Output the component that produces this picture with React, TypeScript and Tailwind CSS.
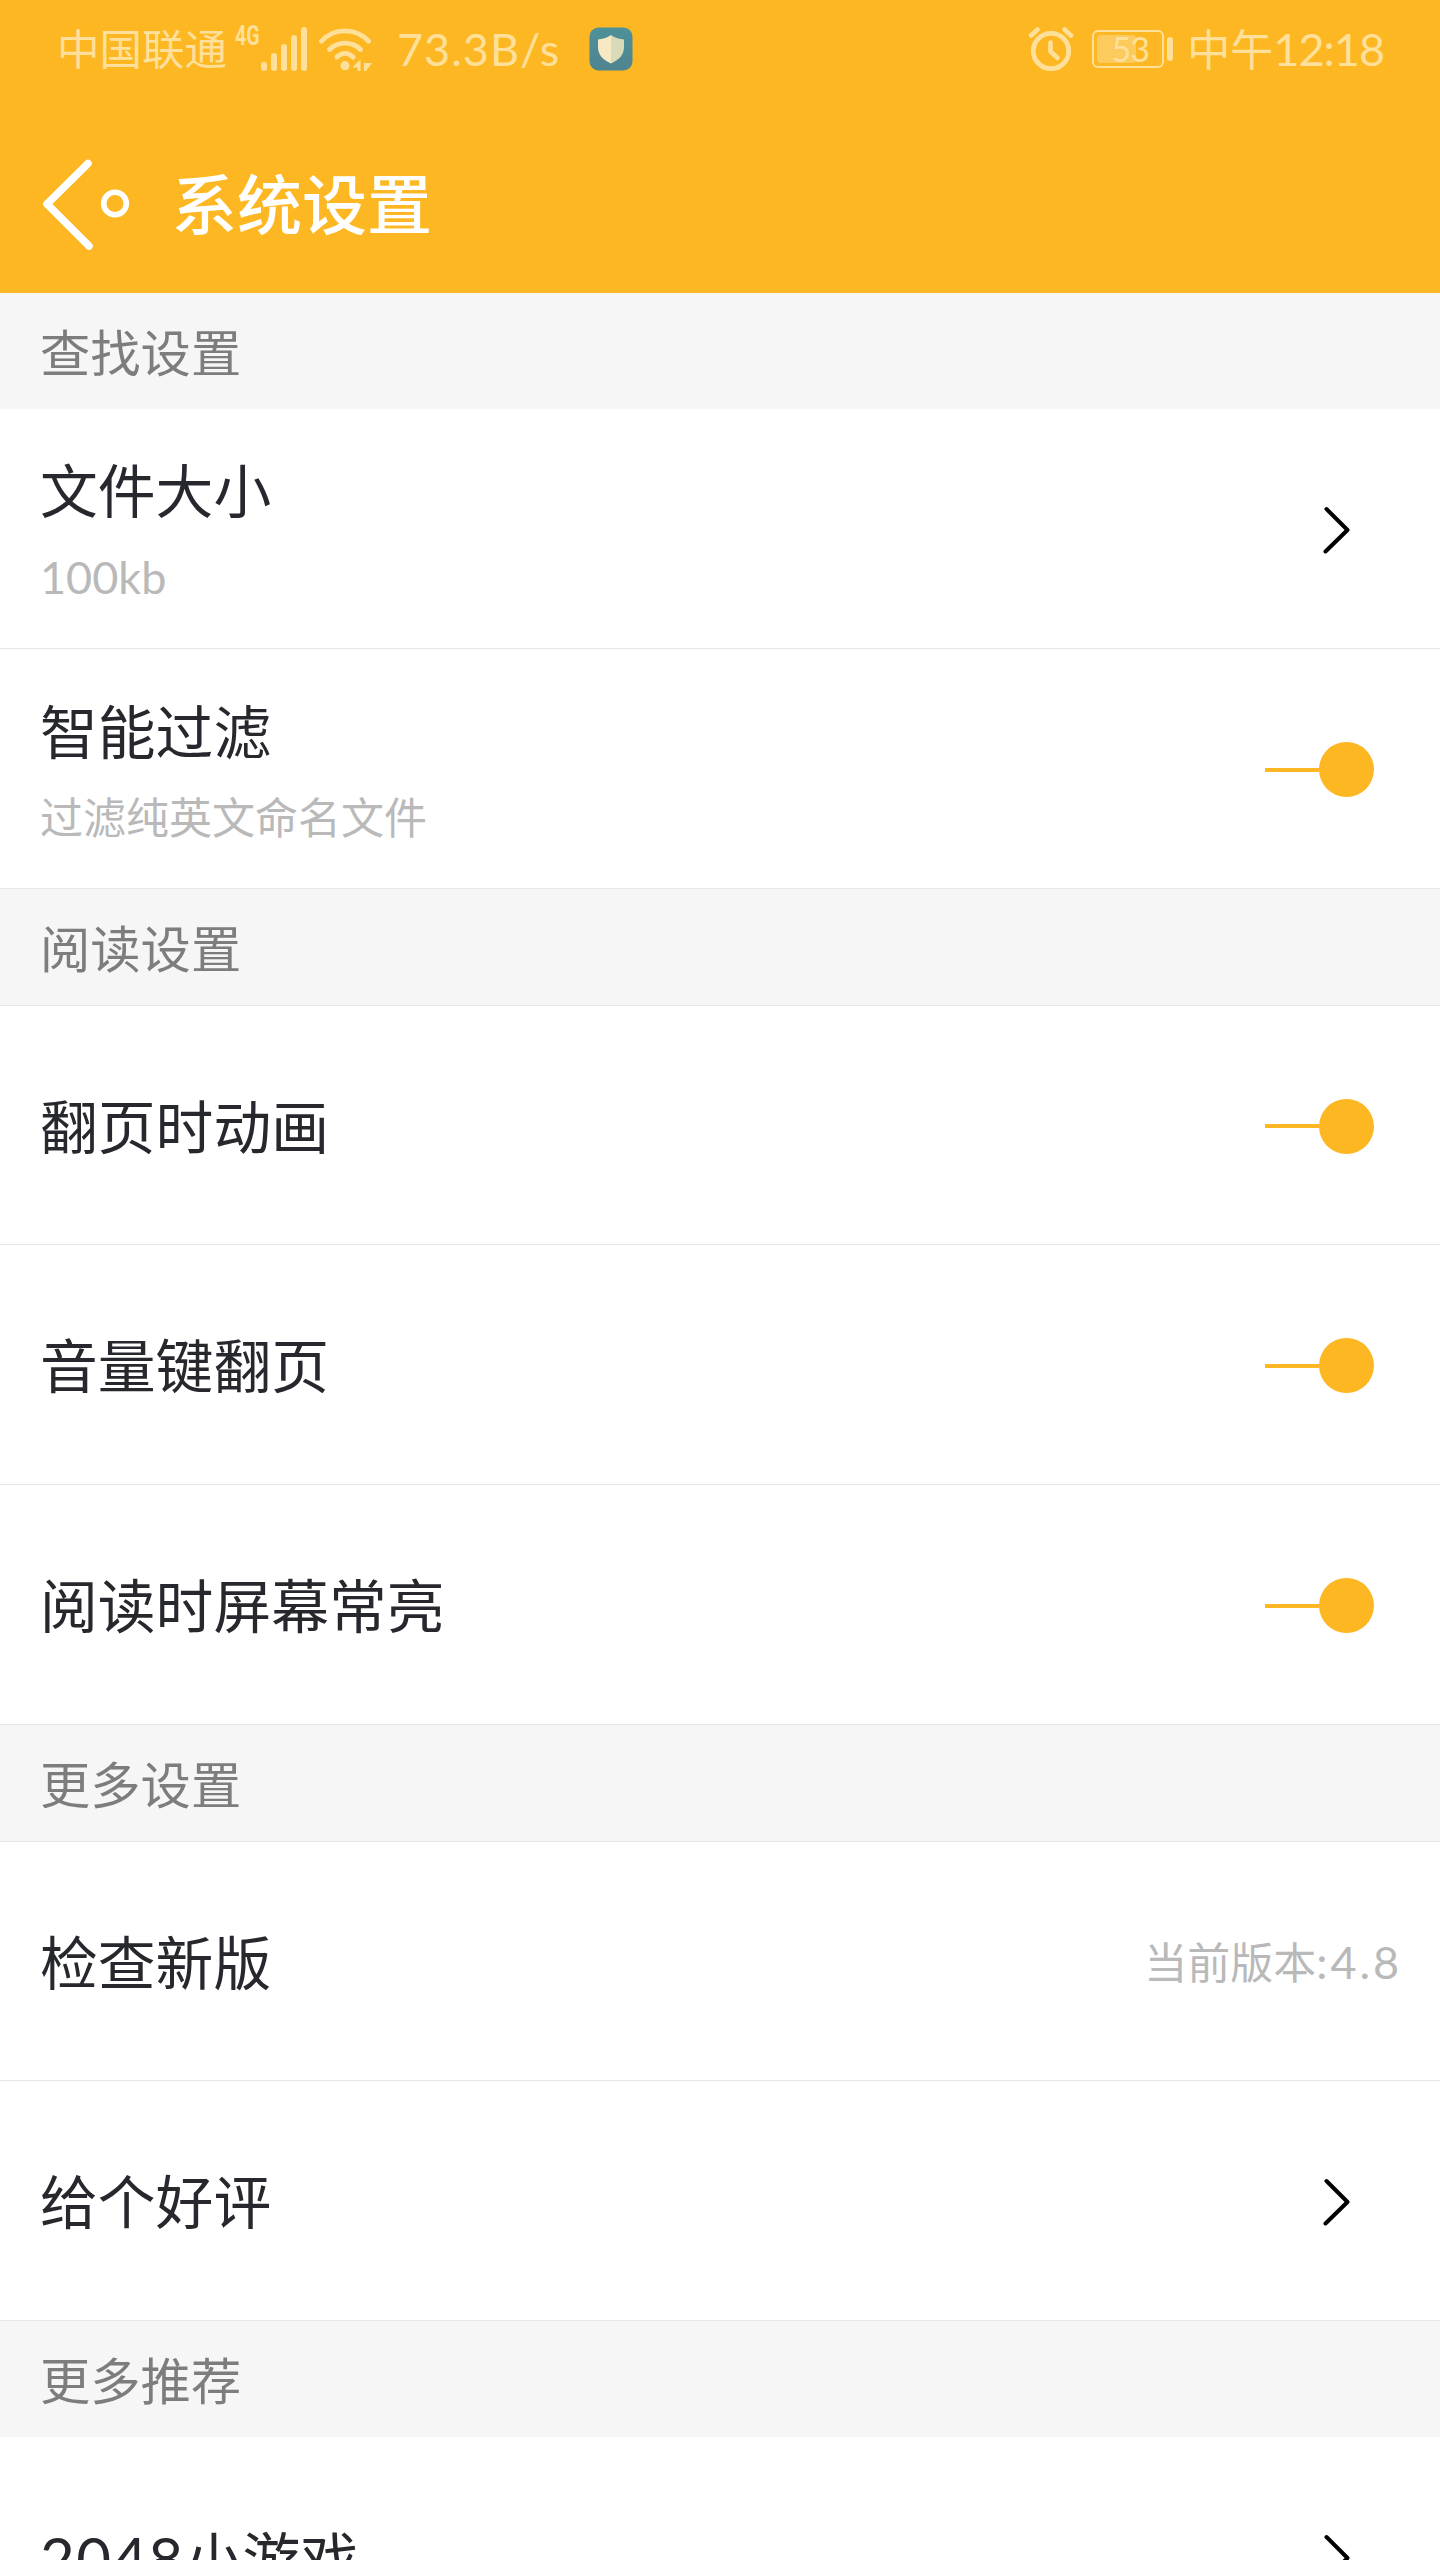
import type { ReactNode } from 'react';
import clsx from 'clsx';

type Item = {
  title: string;
  subtitle?: string;
  value?: string;
  control?: 'arrow' | 'switch';
};

type Section = {
  name: string;
  items: Item[];
  divided?: boolean;
};

const sections: Section[] = [
  {
    name: '查找设置',
    items: [
      { title: '文件大小', subtitle: '100kb', control: 'arrow' },
      { title: '智能过滤', subtitle: '过滤纯英文命名文件', control: 'switch' },
    ],
  },
  {
    name: '阅读设置',
    divided: true,
    items: [
      { title: '翻页时动画', control: 'switch' },
      { title: '音量键翻页', control: 'switch' },
      { title: '阅读时屏幕常亮', control: 'switch' },
    ],
  },
  {
    name: '更多设置',
    divided: true,
    items: [
      { title: '检查新版', value: '当前版本:4.8' },
      { title: '给个好评', control: 'arrow' },
    ],
  },
  {
    name: '更多推荐',
    items: [{ title: '2048小游戏', control: 'arrow' }],
  },
];

// Latin runs are set a little larger and looser than the Chinese around them
function MixedText({ text, latin }: { text: string; latin: string }) {
  return (
    <>
      {text.split(/([\x20-\x7e]+)/).map((part, i) =>
        i % 2 === 1 ? (
          <span key={i} className={latin}>
            {part}
          </span>
        ) : (
          part
        ),
      )}
    </>
  );
}

function SignalIcon() {
  return (
    <svg width="46" height="46" viewBox="0 0 46 46" className="shrink-0" fill="currentColor">
      <rect x="0" y="36" width="6" height="9" rx="3" />
      <rect x="10" y="27" width="6" height="18" rx="3" />
      <rect x="20" y="18" width="6" height="27" rx="3" />
      <rect x="30" y="9" width="6" height="36" rx="3" />
      <rect x="40" y="1" width="6" height="44" rx="3" />
    </svg>
  );
}

function WifiIcon() {
  return (
    <svg width="54" height="46" viewBox="0 0 54 46" className="shrink-0" fill="none">
      <g stroke="currentColor" strokeWidth="4.8" strokeLinecap="round">
        <path d="M2.5 15.2C15 1.5 37 1.5 49.5 15.2" />
        <path d="M10.5 23.5C19 15 33 15 41.5 23.5" />
        <path d="M17.8 31.2C22.5 26 29.5 26 34.2 31.2" />
      </g>
      <circle cx="26" cy="39.7" r="4.6" fill="currentColor" />
      <path d="M34 40.5 41.5 33.5V45H38.5V41.5H34ZM45 37H53L47 45H45Z" fill="currentColor" />
    </svg>
  );
}

function ShieldIcon() {
  return (
    <svg width="44" height="44" viewBox="0 0 44 44" className="shrink-0">
      <defs>
        <linearGradient id="shieldBg" x1="0" y1="0" x2="0" y2="1">
          <stop offset="0" stopColor="#4d9199" />
          <stop offset="1" stopColor="#4f8490" />
        </linearGradient>
      </defs>
      <rect x="0.5" y="0.5" width="43" height="43" rx="9" fill="url(#shieldBg)" />
      <path d="M22 8C18 11 13 12.2 9 12.5V20C9 28 14 33 22 36.5Z" fill="#f7e9c4" />
      <path d="M22 8C26 11 31 12.2 35 12.5V20C35 28 30 33 22 36.5Z" fill="#d9dbb8" />
    </svg>
  );
}

function AlarmIcon() {
  return (
    <svg width="46" height="46" viewBox="0 0 46 46" className="shrink-0" fill="none" stroke="currentColor" strokeLinecap="round">
      <circle cx="23" cy="25" r="17.7" strokeWidth="4.8" />
      <path d="M3 9.5 9.5 3.5M36.5 3.5 43 9.5" strokeWidth="4.6" />
      <path d="M22.5 16.5V25.5L29.5 32" strokeWidth="4.6" strokeLinejoin="round" />
    </svg>
  );
}

function Battery({ level }: { level: number }) {
  return (
    <div className="flex items-center gap-[3px]">
      <div className="relative flex h-[38px] w-[72px] items-center rounded-md border-2 border-[#ffe09a] px-[3px]">
        <div className="h-7 rounded-sm bg-[#fdca5e]" style={{ width: `${level * 1.17}%` }} />
        <span className="absolute inset-0 flex items-center justify-center pl-1 text-[34px] leading-none tracking-[-1px]">
          {level}
        </span>
      </div>
      <div className="h-6 w-[6px] rounded-full bg-[#ffe09a]" />
    </div>
  );
}

function StatusBar() {
  return (
    <div className="flex h-[98px] items-center pr-14 pl-[57px] text-[#ffe09a]">
      <span className="w-[178px] text-[42.5px] leading-none whitespace-nowrap">中国联通</span>
      <span className="mb-[26px] w-[26px] origin-left scale-x-70 font-['Roboto'] text-[28px] leading-none font-bold">
        4G
      </span>
      <SignalIcon />
      <span className="ml-3">
        <WifiIcon />
      </span>
      <span className="ml-6 w-[192px] text-[45px] leading-none tracking-[1px] whitespace-nowrap">73.3B/s</span>
      <ShieldIcon />
      <div className="ml-auto flex items-center">
        <AlarmIcon />
        <div className="ml-[18px]">
          <Battery level={53} />
        </div>
        <span className="ml-[14px] flex items-center leading-none whitespace-nowrap">
          <span className="text-[43px]">中午</span>
          <span className="text-[45px] tracking-[-1px]">12:18</span>
        </span>
      </div>
    </div>
  );
}

function TitleBar() {
  return (
    <div className="flex h-[195px] items-center pt-4 pl-10">
      <svg width="92" height="96" viewBox="0 0 92 96" className="shrink-0" fill="none" stroke="#fff">
        <path d="M48 7.5 7 48 49 90" strokeWidth="7.5" strokeLinecap="round" strokeLinejoin="round" />
        <circle cx="75" cy="47.5" r="11.3" strokeWidth="5.6" />
      </svg>
      <h1 className="ml-10 pt-0.5 text-[65px] leading-none font-medium text-white">系统设置</h1>
    </div>
  );
}

function Arrow() {
  return (
    <svg width="28" height="50" viewBox="0 0 28 50" className="mt-[3px] mr-[49px]" fill="none" stroke="#000">
      <path d="M3.5 4 24.5 25 2.5 46.5" strokeWidth="4" strokeLinecap="round" strokeLinejoin="round" />
    </svg>
  );
}

function Switch() {
  return (
    <div className="mt-0.5 mr-[26px] flex items-center">
      <div className="h-1 w-[54px] bg-[#fcb722]" />
      <div className="size-[55px] rounded-full bg-[#fcb722]" />
    </div>
  );
}

function Row({ item, topBorder }: { item: Item; topBorder?: boolean }) {
  let right: ReactNode = null;
  if (item.control === 'arrow') right = <Arrow />;
  if (item.control === 'switch') right = <Switch />;
  if (item.value) {
    right = (
      <span className="mt-1 mr-[-2px] text-[43px] text-[#b9b9b9]">
        <MixedText text={item.value} latin="text-[45px] tracking-[2.9px]" />
      </span>
    );
  }

  return (
    <div
      className={clsx(
        'flex h-60 items-center justify-between border-b border-[#e6e6e6] bg-white px-10',
        topBorder && 'border-t',
      )}
    >
      <div className={clsx('flex flex-col gap-[22px]', item.subtitle ? 'pt-3' : 'pt-[3px]')}>
        <p className="text-[57.8px] leading-[64px] text-[#26282e]">
          <MixedText text={item.title} latin="text-[60px] tracking-[1.4px]" />
        </p>
        {item.subtitle && (
          <p className="text-[43px] leading-[64px] text-[#b9b9b9]">
            <MixedText text={item.subtitle} latin="text-[45px]" />
          </p>
        )}
      </div>
      {right}
    </div>
  );
}

export default function App() {
  return (
    <div className="flex h-[2560px] w-[1440px] flex-col overflow-hidden bg-white font-['Lato','Noto_Sans_CJK_SC',sans-serif]">
      <header className="shrink-0 bg-[#fcb722]">
        <StatusBar />
        <TitleBar />
      </header>
      {sections.map((section) => (
        <section key={section.name} className="shrink-0">
          <h2 className="flex h-[116px] items-center bg-[#f6f6f6] px-10 pt-1 text-[50.3px] leading-none text-[#7d7d7d]">
            {section.name}
          </h2>
          {section.items.map((item, i) => (
            <Row key={item.title} item={item} topBorder={section.divided && i === 0} />
          ))}
        </section>
      ))}
    </div>
  );
}
